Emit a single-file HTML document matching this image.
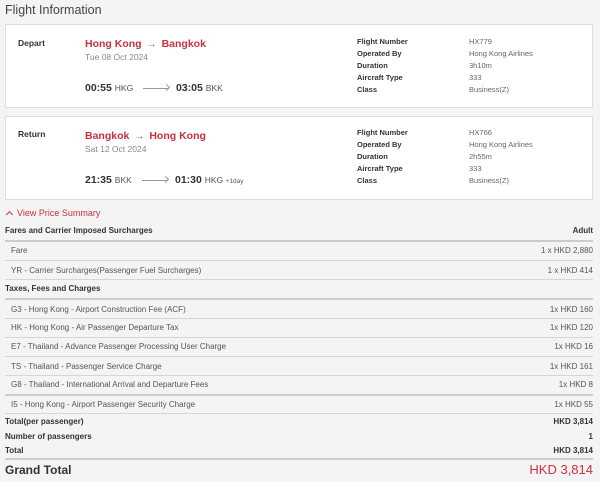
<!DOCTYPE html>
<html><head><style>
*{margin:0;padding:0;box-sizing:border-box}
body{width:600px;height:482px;background:#f4f4f4;font-family:"Liberation Sans",sans-serif;color:#333;position:relative;overflow:hidden}
.a{position:absolute;white-space:nowrap}
.card{position:absolute;left:5px;width:588px;height:84px;background:#fff;border:1px solid #ddd}
.red{color:#c9303e}
.lab{font-size:7.5px;font-weight:bold;color:#333}
.val{font-size:7.5px;color:#666}
.ln{position:absolute;left:5px;width:588px;height:1px;background:#d6d6d6}
.ln2{position:absolute;left:5px;width:588px;height:2px;background:#ccc}
.r{font-size:8px;color:#555}
.h{font-size:8px;font-weight:bold;color:#333}
.rt{right:7px;text-align:right}
.ar{color:#666;font-size:10px;margin:0 5px;font-weight:bold}
</style></head><body>
<div class="a" style="left:5px;top:3px;font-size:12.5px;color:#444">Flight Information</div>

<div class="card" style="top:24px"></div>
<div class="a" style="left:18px;top:38px;font-size:8.5px;font-weight:bold">Depart</div>
<div class="a red" style="left:85px;top:38px;font-size:10.5px;font-weight:bold">Hong Kong<span class="ar">→</span>Bangkok</div>
<div class="a" style="left:85px;top:52px;font-size:8.5px;color:#888">Tue 08 Oct 2024</div>
<div class="a" style="left:85px;top:82px;font-size:10.5px;font-weight:bold">00:55 <span style="font-weight:normal;font-size:8.5px;color:#555">HKG</span></div>
<div class="a" style="left:143px;top:88px;width:26px;height:1px;background:#999"></div>
<div class="a" style="left:164px;top:85px;width:5px;height:5px;border-top:1px solid #999;border-right:1px solid #999;transform:rotate(45deg)"></div>
<div class="a" style="left:176px;top:82px;font-size:10.5px;font-weight:bold">03:05 <span style="font-weight:normal;font-size:8.5px;color:#555">BKK</span></div>
<div class="a lab" style="left:357px;top:36px;line-height:12px">Flight Number<br>Operated By<br>Duration<br>Aircraft Type<br>Class</div>
<div class="a val" style="left:469px;top:36px;line-height:12px">HX779<br>Hong Kong Airlines<br>3h10m<br>333<br>Business(Z)</div>

<div class="card" style="top:116px"></div>
<div class="a" style="left:18px;top:129px;font-size:8.5px;font-weight:bold">Return</div>
<div class="a red" style="left:85px;top:130px;font-size:10.5px;font-weight:bold">Bangkok<span class="ar">→</span>Hong Kong</div>
<div class="a" style="left:85px;top:144px;font-size:8.5px;color:#888">Sat 12 Oct 2024</div>
<div class="a" style="left:85px;top:174px;font-size:10.5px;font-weight:bold">21:35 <span style="font-weight:normal;font-size:8.5px;color:#555">BKK</span></div>
<div class="a" style="left:142px;top:180px;width:26px;height:1px;background:#999"></div>
<div class="a" style="left:163px;top:177px;width:5px;height:5px;border-top:1px solid #999;border-right:1px solid #999;transform:rotate(45deg)"></div>
<div class="a" style="left:175px;top:174px;font-size:10.5px;font-weight:bold">01:30 <span style="font-weight:normal;font-size:8.5px;color:#555">HKG <span style="font-size:6.5px">+1day</span></span></div>
<div class="a lab" style="left:357px;top:127px;line-height:12px">Flight Number<br>Operated By<br>Duration<br>Aircraft Type<br>Class</div>
<div class="a val" style="left:469px;top:127px;line-height:12px">HX766<br>Hong Kong Airlines<br>2h55m<br>333<br>Business(Z)</div>

<div class="a red" style="left:6px;top:208px;font-size:9px"><span style="display:inline-block;width:5px;height:5px;border-top:1.5px solid #c9303e;border-left:1.5px solid #c9303e;transform:rotate(45deg);margin:0 5px 0 1px;vertical-align:-1px"></span>View Price Summary</div>
<div class="a h" style="left:5px;top:226px">Fares and Carrier Imposed Surcharges</div>
<div class="a h rt" style="top:226px">Adult</div>
<div class="ln2" style="top:240px"></div>
<div class="a r" style="left:11px;top:246px">Fare</div><div class="a r rt" style="top:246px">1 x HKD 2,880</div>
<div class="ln" style="top:260px"></div>
<div class="a r" style="left:11px;top:266px">YR - Carrier Surcharges(Passenger Fuel Surcharges)</div><div class="a r rt" style="top:266px">1 x HKD 414</div>
<div class="ln" style="top:279px"></div>
<div class="a h" style="left:5px;top:284px">Taxes, Fees and Charges</div>
<div class="ln2" style="top:298px"></div>
<div class="a r" style="left:11px;top:305px">G3 - Hong Kong - Airport Construction Fee (ACF)</div><div class="a r rt" style="top:305px">1x HKD 160</div>
<div class="ln" style="top:318px"></div>
<div class="a r" style="left:11px;top:323px">HK - Hong Kong - Air Passenger Departure Tax</div><div class="a r rt" style="top:323px">1x HKD 120</div>
<div class="ln" style="top:337px"></div>
<div class="a r" style="left:11px;top:342px">E7 - Thailand - Advance Passenger Processing User Charge</div><div class="a r rt" style="top:342px">1x HKD 16</div>
<div class="ln" style="top:356px"></div>
<div class="a r" style="left:11px;top:362px">TS - Thailand - Passenger Service Charge</div><div class="a r rt" style="top:362px">1x HKD 161</div>
<div class="ln" style="top:375px"></div>
<div class="a r" style="left:11px;top:380px">G8 - Thailand - International Arrival and Departure Fees</div><div class="a r rt" style="top:380px">1x HKD 8</div>
<div class="ln2" style="top:394px"></div>
<div class="a r" style="left:11px;top:400px">I5 - Hong Kong - Airport Passenger Security Charge</div><div class="a r rt" style="top:400px">1x HKD 55</div>
<div class="ln" style="top:413px"></div>
<div class="a h" style="left:5px;top:417px">Total(per passenger)</div><div class="a h rt" style="top:417px">HKD 3,814</div>
<div class="a h" style="left:5px;top:432px">Number of passengers</div><div class="a h rt" style="top:432px">1</div>
<div class="a h" style="left:5px;top:446px">Total</div><div class="a h rt" style="top:446px">HKD 3,814</div>
<div class="ln2" style="top:458px"></div>
<div class="a" style="left:5px;top:463px;font-size:12px;font-weight:bold;color:#333">Grand Total</div>
<div class="a red rt" style="top:462px;font-size:13px">HKD 3,814</div>
</body></html>
